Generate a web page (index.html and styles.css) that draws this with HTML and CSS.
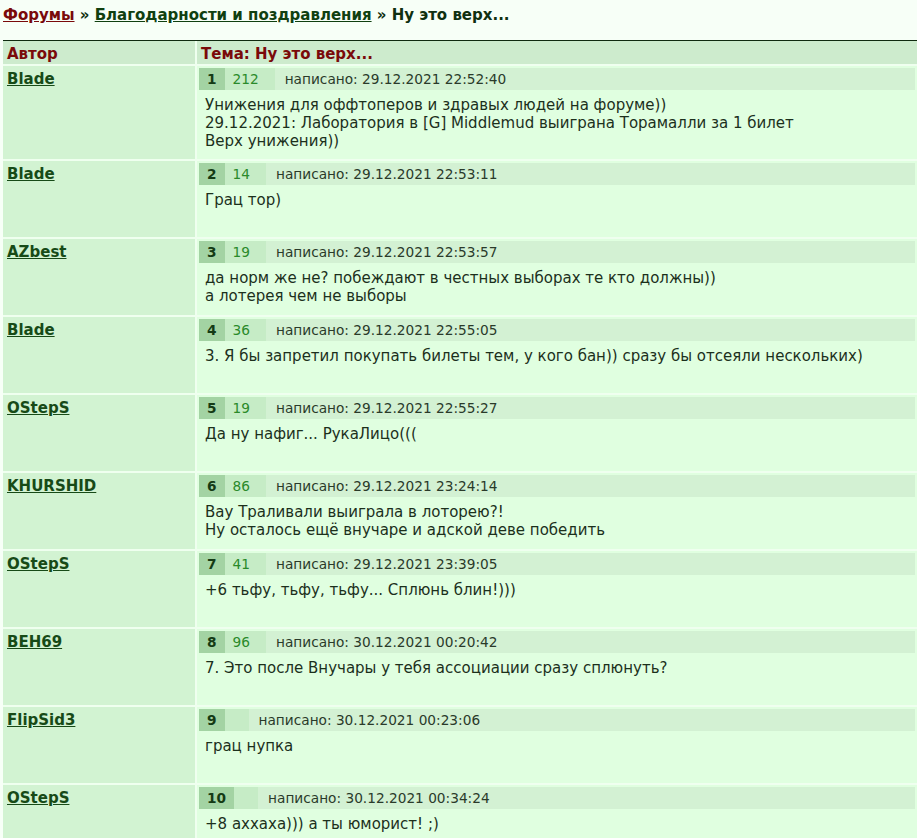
FILE: index.html
```html
<!DOCTYPE html>
<html lang="ru">
<head>
    <meta charset="UTF-8">
    <meta name="viewport" content="width=device-width, initial-scale=1.0">
    <title>Ну это верх...</title>
    <link rel="stylesheet" href="styles.css">
</head>
<body>
    <div class="crumbs">
        <a href="#" class="forums">Форумы</a> &raquo;
        <a href="#" class="section">Благодарности и поздравления</a> &raquo;
        Ну это верх...
    </div>

    <div class="thread">
        <div class="head">Автор</div>
        <div class="head">Тема: Ну это верх...</div>

        <div class="author"><a href="#">Blade</a></div>
        <div class="post">
            <div class="bar"><span class="num">1</span><span class="rate">212</span><span class="date">написано: 29.12.2021 22:52:40</span></div>
            <div class="msg">Унижения для оффтоперов и здравых людей на форуме))<br>29.12.2021: Лаборатория в [G] Middlemud выиграна Торамалли за 1 билет<br>Верх унижения))</div>
        </div>

        <div class="author"><a href="#">Blade</a></div>
        <div class="post">
            <div class="bar"><span class="num">2</span><span class="rate">14</span><span class="date">написано: 29.12.2021 22:53:11</span></div>
            <div class="msg">Грац тор)</div>
        </div>

        <div class="author"><a href="#">AZbest</a></div>
        <div class="post">
            <div class="bar"><span class="num">3</span><span class="rate">19</span><span class="date">написано: 29.12.2021 22:53:57</span></div>
            <div class="msg">да норм же не? побеждают в честных выборах те кто должны))<br>а лотерея чем не выборы</div>
        </div>

        <div class="author"><a href="#">Blade</a></div>
        <div class="post">
            <div class="bar"><span class="num">4</span><span class="rate">36</span><span class="date">написано: 29.12.2021 22:55:05</span></div>
            <div class="msg">3. Я бы запретил покупать билеты тем, у кого бан)) сразу бы отсеяли нескольких)</div>
        </div>

        <div class="author"><a href="#">OStepS</a></div>
        <div class="post">
            <div class="bar"><span class="num">5</span><span class="rate">19</span><span class="date">написано: 29.12.2021 22:55:27</span></div>
            <div class="msg">Да ну нафиг... РукаЛицо(((</div>
        </div>

        <div class="author"><a href="#">KHURSHID</a></div>
        <div class="post">
            <div class="bar"><span class="num">6</span><span class="rate">86</span><span class="date">написано: 29.12.2021 23:24:14</span></div>
            <div class="msg">Вау Траливали выиграла в лоторею?!<br>Ну осталось ещё внучаре и адской деве победить</div>
        </div>

        <div class="author"><a href="#">OStepS</a></div>
        <div class="post">
            <div class="bar"><span class="num">7</span><span class="rate">41</span><span class="date">написано: 29.12.2021 23:39:05</span></div>
            <div class="msg">+6 тьфу, тьфу, тьфу... Сплюнь блин!)))</div>
        </div>

        <div class="author"><a href="#">BEH69</a></div>
        <div class="post">
            <div class="bar"><span class="num">8</span><span class="rate">96</span><span class="date">написано: 30.12.2021 00:20:42</span></div>
            <div class="msg">7. Это после Внучары у тебя ассоциации сразу сплюнуть?</div>
        </div>

        <div class="author"><a href="#">FlipSid3</a></div>
        <div class="post">
            <div class="bar"><span class="num">9</span><span class="rate"></span><span class="date">написано: 30.12.2021 00:23:06</span></div>
            <div class="msg">грац нупка</div>
        </div>

        <div class="author"><a href="#">OStepS</a></div>
        <div class="post">
            <div class="bar"><span class="num">10</span><span class="rate"></span><span class="date">написано: 30.12.2021 00:34:24</span></div>
            <div class="msg">+8 аххаха))) а ты юморист! ;)</div>
        </div>
    </div>
</body>
</html>
```

FILE: styles.css
```css
body {
    font-family: 'DejaVu Sans', Verdana, sans-serif;
    margin: 0;
    padding: 0;
    background-color: #f7fff7;
    color: #1c301c;
    overflow: hidden;
}

.crumbs {
    padding: 6px 3px 0;
    height: 40px;
    box-sizing: border-box;
    font-size: 15px;
    font-weight: bold;
    color: #103010;
}

.crumbs a {
    text-decoration: underline;
}

.crumbs .forums {
    color: #7a0a0a;
}

.crumbs .section {
    color: #104010;
}

.thread {
    display: grid;
    grid-template-columns: 192px 1fr;
    gap: 2px;
    margin-left: 3px;
    border-top: 1px solid #102a10;
    background-color: #efffef;
}

.head {
    background-color: #cdebcd;
    color: #7a0a0a;
    font-size: 15px;
    font-weight: bold;
    height: 23px;
    line-height: 26px;
    padding: 0 4px;
}

.author {
    background-color: #d2f3d2;
    padding: 3px 4px;
    min-height: 70px;
}

.author a {
    color: #174a17;
    font-size: 15px;
    font-weight: bold;
}

.post {
    background-color: #e0ffe0;
    padding: 2px;
}

.bar {
    display: flex;
    height: 22px;
    line-height: 23px;
    font-size: 13.7px;
    background-color: #d3f1d3;
}

.num {
    background-color: #a3d3a3;
    color: #143a14;
    font-weight: bold;
    padding: 0 8px;
    min-width: 8px;
    text-align: center;
}

.rate {
    background-color: #c6ecc6;
    color: #2a8a2a;
    padding: 0 16px 0 8px;
}

.date {
    color: #2a3a2a;
    padding-left: 10px;
}

.msg {
    font-size: 15px;
    line-height: 18px;
    padding: 6px 6px 7px;
}
```
